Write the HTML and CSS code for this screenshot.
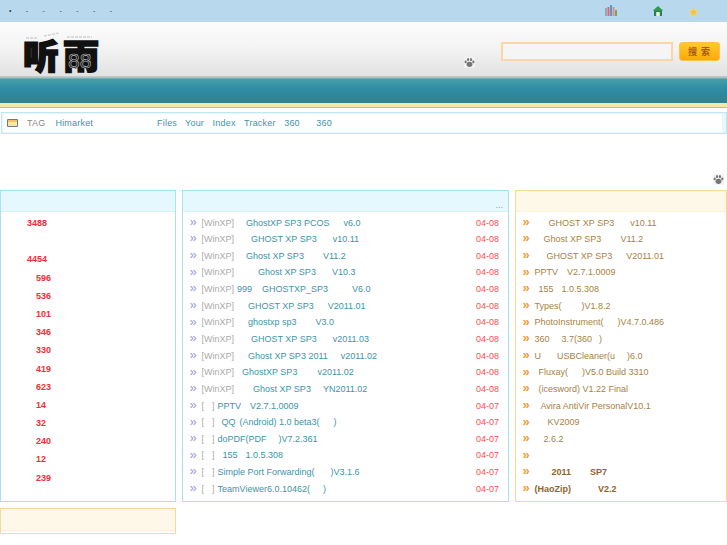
FILE: index.html
```html
<!DOCTYPE html>
<html lang="zh">
<head>
<meta charset="utf-8">
<title>听雨</title>
<link rel="stylesheet" href="styles.css">
</head>
<body>
<div class="topbar">
  <div class="topnav"><span>•</span><span>-</span><span>-</span><span>-</span><span>-</span><span>-</span><span>-</span></div>
  <div class="topicons">
    <svg class="ic-bars" viewBox="0 0 12 11"><rect x="0" y="3" width="2" height="8" fill="#9aa5b5"/><rect x="2.5" y="2" width="2" height="9" fill="#e8636b"/><rect x="5" y="0" width="2" height="11" fill="#4aa3d8"/><rect x="7.5" y="2" width="2" height="9" fill="#e88a8a"/><rect x="10" y="5" width="2" height="6" fill="#7aa84a"/></svg>
    <svg class="ic-home" viewBox="0 0 10 10"><path d="M5 0 L10 4.5 L9 5 L1 5 L0 4.5 Z" fill="#2f9a4a"/><rect x="1" y="5" width="8" height="5" fill="#2c7d5a"/><rect x="3.2" y="6" width="3.6" height="4" fill="#e8f2e0"/></svg>
    <svg class="ic-star" viewBox="0 0 10 10"><path d="M5 0 L6.4 3.4 L10 3.7 L7.2 6 L8.2 9.6 L5 7.7 L1.8 9.6 L2.8 6 L0 3.7 L3.6 3.4 Z" fill="#f2c544" stroke="#f8e090" stroke-width=".5"/></svg>
  </div>
</div>
<header class="header">
  <svg class="logo" viewBox="0 0 90 54">
    <text class="logo-t" transform="translate(2 47) scale(1.06 1)">听</text>
    <text class="logo-t" transform="translate(42 47) scale(1.06 1)">雨</text>
    <text class="logo-n" x="47" y="46">88</text>
    <path class="logo-ice" d="M5 16 h11 M23 14 l15 -3 M46 15 h25"/>
  </svg>
  <svg class="paw paw-head" viewBox="0 0 12 12"><use href="#pawshape"/></svg>
  <div class="search">
    <input class="search-input" type="text">
    <button class="search-btn" type="button">搜 索</button>
  </div>
</header>
<div class="band"></div>
<div class="sand"></div>
<div class="tagbar">
  <div class="tagbar-in">
    <svg class="tag-ic" viewBox="0 0 11 8"><rect width="11" height="8" rx="1" fill="#6f7a88"/><rect x="1" y="1" width="9" height="2" fill="#f3c65a"/><rect x="1" y="3" width="9" height="4" fill="#f6e6a8"/></svg>
    <span class="tag-label">TAG</span>
    <a class="t-himarket">Himarket</a>
    <a class="t-files">Files</a>
    <a class="t-link">Your</a>
    <a class="t-link">Index</a>
    <a class="t-link">Tracker</a>
    <a class="t-link">360</a>
    <a class="t-last">360</a>
  </div>
</div>
<div class="paw-row">
  <svg class="paw paw-side" viewBox="0 0 12 12">
    <g id="pawshape" fill="#777"><ellipse cx="6" cy="8" rx="3.2" ry="2.8"/><ellipse cx="1.8" cy="5.4" rx="1.2" ry="1.5"/><ellipse cx="4.4" cy="2.8" rx="1.2" ry="1.7"/><ellipse cx="7.6" cy="2.8" rx="1.2" ry="1.7"/><ellipse cx="10.2" cy="5.4" rx="1.2" ry="1.5"/></g>
  </svg>
</div>
<main class="cols">
  <div class="col-left">
    <section class="panel panel-blue panel-rank">
      <div class="phead"></div>
      <ul class="rank">
        <li class="r4">3488</li>
        <li class="blank"></li>
        <li class="r4">4454</li>
        <li>596</li>
        <li>536</li>
        <li>101</li>
        <li>346</li>
        <li>330</li>
        <li>419</li>
        <li>623</li>
        <li>14</li>
        <li>32</li>
        <li>240</li>
        <li>12</li>
        <li>239</li>
      </ul>
    </section>
    <section class="panel panel-yellow panel-small"><div class="phead"></div></section>
  </div>
  <section class="panel panel-blue panel-mid">
    <div class="phead"><span class="more">...</span></div>
    <ul class="list">
      <li><i class="ch"></i><b class="cat">[WinXP]</b><i class="g12"></i><a>GhostXP SP3 PCOS</a><i class="g14"></i><a>v6.0</a><em>04-08</em></li>
      <li><i class="ch"></i><b class="cat">[WinXP]</b><i class="g17"></i><a>GHOST XP SP3</a><i class="g16"></i><a>v10.11</a><em>04-08</em></li>
      <li><i class="ch"></i><b class="cat">[WinXP]</b><i class="g12"></i><a>Ghost XP SP3</a><i class="g19"></i><a>V11.2</a><em>04-08</em></li>
      <li><i class="ch"></i><b class="cat">[WinXP]</b><i class="g24"></i><a>Ghost XP SP3</a><i class="g16"></i><a>V10.3</a><em>04-08</em></li>
      <li><i class="ch"></i><b class="cat">[WinXP]</b><i class="g3"></i><a>999</a><i class="g10"></i><a>GHOSTXP_SP3</a><i class="g24"></i><a>V6.0</a><em>04-08</em></li>
      <li><i class="ch"></i><b class="cat">[WinXP]</b><i class="g14"></i><a>GHOST XP SP3</a><i class="g14"></i><a>V2011.01</a><em>04-08</em></li>
      <li><i class="ch"></i><b class="cat">[WinXP]</b><i class="g14"></i><a>ghostxp sp3</a><i class="g19"></i><a>V3.0</a><em>04-08</em></li>
      <li><i class="ch"></i><b class="cat">[WinXP]</b><i class="g17"></i><a>GHOST XP SP3</a><i class="g16"></i><a>v2011.03</a><em>04-08</em></li>
      <li><i class="ch"></i><b class="cat">[WinXP]</b><i class="g14"></i><a>Ghost XP SP3 2011</a><i class="g13"></i><a>v2011.02</a><em>04-08</em></li>
      <li><i class="ch"></i><b class="cat">[WinXP]</b><i class="g8"></i><a>GhostXP SP3</a><i class="g20"></i><a>v2011.02</a><em>04-08</em></li>
      <li><i class="ch"></i><b class="cat">[WinXP]</b><i class="g19"></i><a>Ghost XP SP3</a><i class="g12"></i><a>YN2011.02</a><em>04-08</em></li>
      <li><i class="ch"></i><b class="cat cat-e">[<i class="g8"></i>]</b><i class="g3"></i><a>PPTV</a><i class="g9"></i><a>V2.7.1.0009</a><em>04-07</em></li>
      <li><i class="ch"></i><b class="cat cat-e">[<i class="g8"></i>]</b><i class="g7"></i><a>QQ</a><i class="g4"></i><a>(Android) 1.0 beta3(</a><i class="g14"></i><a>)</a><em>04-07</em></li>
      <li><i class="ch"></i><b class="cat cat-e">[<i class="g8"></i>]</b><i class="g3"></i><a>doPDF(PDF</a><i class="g12"></i><a>)V7.2.361</a><em>04-07</em></li>
      <li><i class="ch"></i><b class="cat cat-e">[<i class="g8"></i>]</b><i class="g8"></i><a>155</a><i class="g8"></i><a>1.0.5.308</a><em>04-07</em></li>
      <li><i class="ch"></i><b class="cat cat-e">[<i class="g8"></i>]</b><i class="g3"></i><a>Simple Port Forwarding(</a><i class="g16"></i><a>)V3.1.6</a><em>04-07</em></li>
      <li><i class="ch"></i><b class="cat cat-e">[<i class="g8"></i>]</b><i class="g3"></i><a>TeamViewer6.0.10462(</a><i class="g13"></i><a>)</a><em>04-07</em></li>
    </ul>
  </section>
  <section class="panel panel-yellow panel-right">
    <div class="phead"></div>
    <ul class="list list-brown">
      <li><i class="ch ch-o"></i><i class="g14"></i><a>GHOST XP SP3</a><i class="g16"></i><a>v10.11</a></li>
      <li><i class="ch ch-o"></i><i class="g9"></i><a>Ghost XP SP3</a><i class="g19"></i><a>V11.2</a></li>
      <li><i class="ch ch-o"></i><i class="g12"></i><a>GHOST XP SP3</a><i class="g14"></i><a>V2011.01</a></li>
      <li><i class="ch ch-o"></i><a>PPTV</a><i class="g9"></i><a>V2.7.1.0009</a></li>
      <li><i class="ch ch-o"></i><i class="g4"></i><a>155</a><i class="g8"></i><a>1.0.5.308</a></li>
      <li><i class="ch ch-o"></i><a>Types(</a><i class="g20"></i><a>)V1.8.2</a></li>
      <li><i class="ch ch-o"></i><a>PhotoInstrument(</a><i class="g14"></i><a>)V4.7.0.486</a></li>
      <li><i class="ch ch-o"></i><a>360</a><i class="g12"></i><a>3.7(360</a><i class="g7"></i><a>)</a></li>
      <li><i class="ch ch-o"></i><a>U</a><i class="g16"></i><a>USBCleaner(u</a><i class="g12"></i><a>)6.0</a></li>
      <li><i class="ch ch-o"></i><i class="g4"></i><a>Fluxay(</a><i class="g14"></i><a>)V5.0 Build 3310</a></li>
      <li><i class="ch ch-o"></i><i class="g4"></i><a>(icesword) V1.22 Final</a></li>
      <li><i class="ch ch-o"></i><i class="g6"></i><a>Avira AntiVir PersonalV10.1</a></li>
      <li><i class="ch ch-o"></i><i class="g13"></i><a>KV2009</a></li>
      <li><i class="ch ch-o"></i><i class="g9"></i><a>2.6.2</a></li>
      <li><i class="ch ch-o"></i></li>
      <li class="strong"><i class="ch ch-o"></i><i class="g17"></i><a>2011</a><i class="g19"></i><a>SP7</a></li>
      <li class="strong"><i class="ch ch-o"></i><a>(HaoZip)</a><i class="g27"></i><a>V2.2</a></li>
    </ul>
  </section>
</main>
</body>
</html>
```
FILE: styles.css
```css
* { box-sizing: border-box; }
html, body { margin: 0; padding: 0; }
body {
  background: #fff;
  font-family: "Liberation Sans", Arial, sans-serif;
  font-size: 9px;
  color: #3c94a8;
  overflow: hidden;
  height: 545px;
}
ul { list-style: none; margin: 0; padding: 0; }
i, em, b { font-style: normal; font-weight: normal; }

.topbar {
  height: 22px;
  background: #b8d9ed;
  display: flex;
  align-items: center;
  justify-content: space-between;
}
.topnav {
  display: flex;
  padding: 0 0 1px 9px;
  color: #444;
  font-size: 7px;
}
.topnav span { width: 16.8px; }
.topicons { display: flex; align-items: center; }
.ic-bars { width: 12px; height: 11px; margin-right: 36px; margin-top: -1px; }
.ic-home { width: 10px; height: 10px; margin-right: 25px; margin-top: -1px; }
.ic-star { width: 11px; height: 10px; margin-right: 28px; margin-top: 1px; }

.header {
  height: 54px;
  background: linear-gradient(#fcfcfc 0%, #f4f4f4 45%, #e2e2e2 100%);
  position: relative;
  display: flex;
  align-items: flex-start;
  justify-content: space-between;
  padding: 20px 7px 0 22px;
}
.logo { position: absolute; left: 21px; top: 0; width: 90px; height: 54px; overflow: visible; }
.logo-t {
  font-family: "Noto Sans CJK SC", sans-serif;
  font-size: 34px;
  font-weight: 900;
  fill: #111;
  stroke: #111;
  stroke-width: 1.6px;
}
.logo-n {
  font-family: "Liberation Sans", sans-serif;
  font-size: 21px;
  fill: #111;
  stroke: #bbb;
  stroke-width: 0.6px;
}
.logo-ice { fill: none; stroke: #cfd3cc; stroke-width: 1.4px; stroke-dasharray: 3 1; }
.paw { width: 11px; height: 11px; display: block; }
.paw-head {
  position: absolute;
  left: 464px;
  top: 35px;
  background: #f2f2f2;
}
.paw-side { background: #f4f4f4; }
.search { margin-left: auto; display: flex; gap: 6px; }
.search-input {
  width: 172px;
  height: 19px;
  border: 2px solid #fcd5ab;
  background: #f5f5f5;
  padding: 0;
}
.search-btn {
  width: 41px;
  height: 19px;
  padding: 0;
  border: 1px solid #ffc14a;
  border-radius: 3px;
  background: linear-gradient(#ffc92e, #fba90a);
  color: #a85c10;
  font-family: "Noto Sans CJK SC", sans-serif;
  font-size: 9px;
  font-weight: 700;
  letter-spacing: 1px;
  line-height: 16px;
}

.band {
  height: 27px;
  background: linear-gradient(#c9cfcf 0, #a0bcbd 2px, #48a0a6 3px, #2f8ea6 45%, #2c8aa0 60%, #31828e 100%);
}
.sand {
  height: 5px;
  background: #f6e8a4;
  border-bottom: 1px solid #bdb9a6;
}

.tagbar {
  margin: 4px 0 0 1px;
  height: 22px;
  border: 1px solid #bde8f3;
  padding: 1px 4px 1px 1px;
  background: #e9f7fb;
  letter-spacing: 0.2px;
}
.tagbar-in {
  height: 100%;
  background: #fff;
  display: flex;
  align-items: center;
  padding-left: 4px;
  line-height: 1;
}
.tag-ic { width: 11px; height: 8px; margin-right: 9px; }
.tag-label { color: #888; margin-right: 10px; }
.t-himarket { margin-right: 64px; }
.t-files { margin-right: 8px; }
.t-link { margin-right: 8.5px; }
.t-last { margin-left: 8px; }

.paw-row {
  height: 56px;
  display: flex;
  justify-content: flex-end;
  align-items: flex-end;
  padding: 0 3px 5px 0;
}

.cols { display: flex; align-items: flex-start; gap: 6px; }
.col-left { width: 176px; display: flex; flex-direction: column; gap: 6px; }
.panel { border: 1px solid #a9e2ef; background: #fff; }
.panel-blue .phead { background: #e4f8fd; border-bottom: 1px solid #d4f2f8; }
.panel-yellow { border-color: #f3d99a; }
.panel-yellow .phead { background: #fef8e8; border-bottom: 1px solid #fbf2da; }
.phead { height: 21px; display: flex; justify-content: flex-end; align-items: flex-end; }
.panel-rank { height: 312px; }
.panel-mid { width: 327px; height: 312px; }
.panel-right { width: 212px; height: 312px; }
.panel-small { height: 26px; }
.panel-small .phead { height: 22px; }
.more { color: #7aa6b4; padding-right: 5px; line-height: 11px; }

.rank { padding: 2px 0 0 35px; color: #f42c35; font-weight: bold; }
.rank li { height: 18.2px; line-height: 18.2px; }
.rank .r4 { margin-left: -9px; }

.list { padding: 2.5px 9px 0 6.5px; }
.list li {
  height: 16.65px;
  line-height: 16.65px;
  display: flex;
  align-items: center;
  white-space: pre;
}
.list em { margin-left: auto; color: #ff4d55; }
.list-brown a { color: #a87f44; }
.strong a { font-weight: bold; color: #92642a; }
.cat { color: #aaa; }
.cat-e { display: inline-flex; align-items: center; }
.ch {
  width: 12px;
  flex: none;
  color: #a09cd8;
  font-size: 13px;
  line-height: 10px;
  margin-top: -2px;
}
.ch::before { content: "»"; }
.ch-o { color: #f59a3c; font-weight: bold; }
.g3 { width: 3px; } .g4 { width: 4px; } .g6 { width: 6px; } .g7 { width: 7px; }
.g8 { width: 8px; } .g9 { width: 9px; } .g10 { width: 10px; } .g12 { width: 12px; }
.g13 { width: 13px; } .g14 { width: 14px; } .g16 { width: 16px; } .g17 { width: 17px; }
.g19 { width: 19px; } .g20 { width: 20px; } .g24 { width: 24px; } .g27 { width: 27px; }
.list i[class^="g"], .cat-e i { display: inline-block; flex: none; }
```
